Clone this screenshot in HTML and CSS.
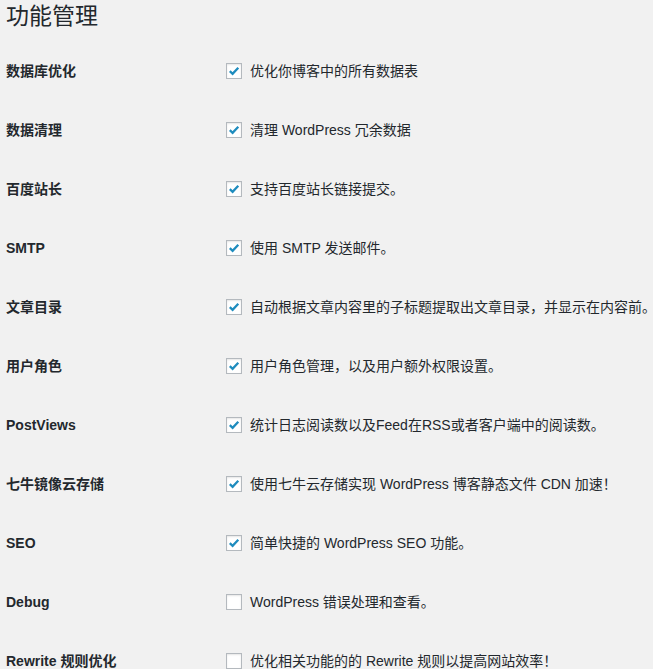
FILE: index.html
```html
<!DOCTYPE html>
<html lang="zh-CN">
<head>
<meta charset="utf-8">
<title>功能管理</title>
<link rel="stylesheet" href="styles.css">
</head>
<body>
<div class="wrap">
  <h1 class="title">功能管理</h1>
  <div class="form-table">
    <div class="row"><div class="th">数据库优化</div><div class="td"><span class="cb on"><svg viewBox="0 0 16 16"><path d="M3.2 8.2 L6.4 11.3 L12.9 4.2"/></svg></span><span class="desc">优化你博客中的所有数据表</span></div></div>
    <div class="row"><div class="th">数据清理</div><div class="td"><span class="cb on"><svg viewBox="0 0 16 16"><path d="M3.2 8.2 L6.4 11.3 L12.9 4.2"/></svg></span><span class="desc">清理 WordPress 冗余数据</span></div></div>
    <div class="row"><div class="th">百度站长</div><div class="td"><span class="cb on"><svg viewBox="0 0 16 16"><path d="M3.2 8.2 L6.4 11.3 L12.9 4.2"/></svg></span><span class="desc">支持百度站长链接提交。</span></div></div>
    <div class="row"><div class="th">SMTP</div><div class="td"><span class="cb on"><svg viewBox="0 0 16 16"><path d="M3.2 8.2 L6.4 11.3 L12.9 4.2"/></svg></span><span class="desc">使用 SMTP 发送邮件。</span></div></div>
    <div class="row"><div class="th">文章目录</div><div class="td"><span class="cb on"><svg viewBox="0 0 16 16"><path d="M3.2 8.2 L6.4 11.3 L12.9 4.2"/></svg></span><span class="desc">自动根据文章内容里的子标题提取出文章目录，并显示在内容前。</span></div></div>
    <div class="row"><div class="th">用户角色</div><div class="td"><span class="cb on"><svg viewBox="0 0 16 16"><path d="M3.2 8.2 L6.4 11.3 L12.9 4.2"/></svg></span><span class="desc">用户角色管理，以及用户额外权限设置。</span></div></div>
    <div class="row"><div class="th">PostViews</div><div class="td"><span class="cb on"><svg viewBox="0 0 16 16"><path d="M3.2 8.2 L6.4 11.3 L12.9 4.2"/></svg></span><span class="desc">统计日志阅读数以及Feed在RSS或者客户端中的阅读数。</span></div></div>
    <div class="row"><div class="th">七牛镜像云存储</div><div class="td"><span class="cb on"><svg viewBox="0 0 16 16"><path d="M3.2 8.2 L6.4 11.3 L12.9 4.2"/></svg></span><span class="desc">使用七牛云存储实现 WordPress 博客静态文件 CDN 加速！</span></div></div>
    <div class="row"><div class="th">SEO</div><div class="td"><span class="cb on"><svg viewBox="0 0 16 16"><path d="M3.2 8.2 L6.4 11.3 L12.9 4.2"/></svg></span><span class="desc">简单快捷的 WordPress SEO 功能。</span></div></div>
    <div class="row"><div class="th">Debug</div><div class="td"><span class="cb"></span><span class="desc">WordPress 错误处理和查看。</span></div></div>
    <div class="row"><div class="th">Rewrite 规则优化</div><div class="td"><span class="cb"></span><span class="desc">优化相关功能的的 Rewrite 规则以提高网站效率！</span></div></div>
  </div>
</div>
</body>
</html>
```

FILE: styles.css
```css
html {
  overflow: hidden;
  background: #f1f1f1;
}
body {
  margin: 0;
  background: #f1f1f1;
  color: #23282d;
  font-family: "Liberation Sans", "Noto Sans CJK SC", sans-serif;
  font-size: 14px;
  white-space: nowrap;
}
.wrap {
  padding-left: 6px;
}
.title {
  margin: 0;
  height: 41px;
  font-size: 23px;
  line-height: 29px;
  font-weight: 400;
  font-family: "Noto Sans CJK SC", sans-serif;
}
.form-table {
  display: flex;
  flex-direction: column;
}
.row {
  display: flex;
  align-items: center;
  height: 59px;
}
.th {
  width: 220px;
  flex: none;
  font-weight: 700;
  line-height: 18px;
}
.td {
  display: flex;
  align-items: center;
  line-height: 18px;
}
.cb {
  width: 16px;
  height: 16px;
  box-sizing: border-box;
  border: 1px solid #b4b9be;
  background: #fff;
  box-shadow: inset 0 1px 2px rgba(0, 0, 0, 0.1);
  flex: none;
  display: flex;
}
.cb svg {
  width: 14px;
  height: 14px;
  fill: none;
  stroke: #1e8cbe;
  stroke-width: 2.6;
  stroke-linecap: butt;
  stroke-linejoin: miter;
}
.desc {
  margin-left: 8px;
}
```
